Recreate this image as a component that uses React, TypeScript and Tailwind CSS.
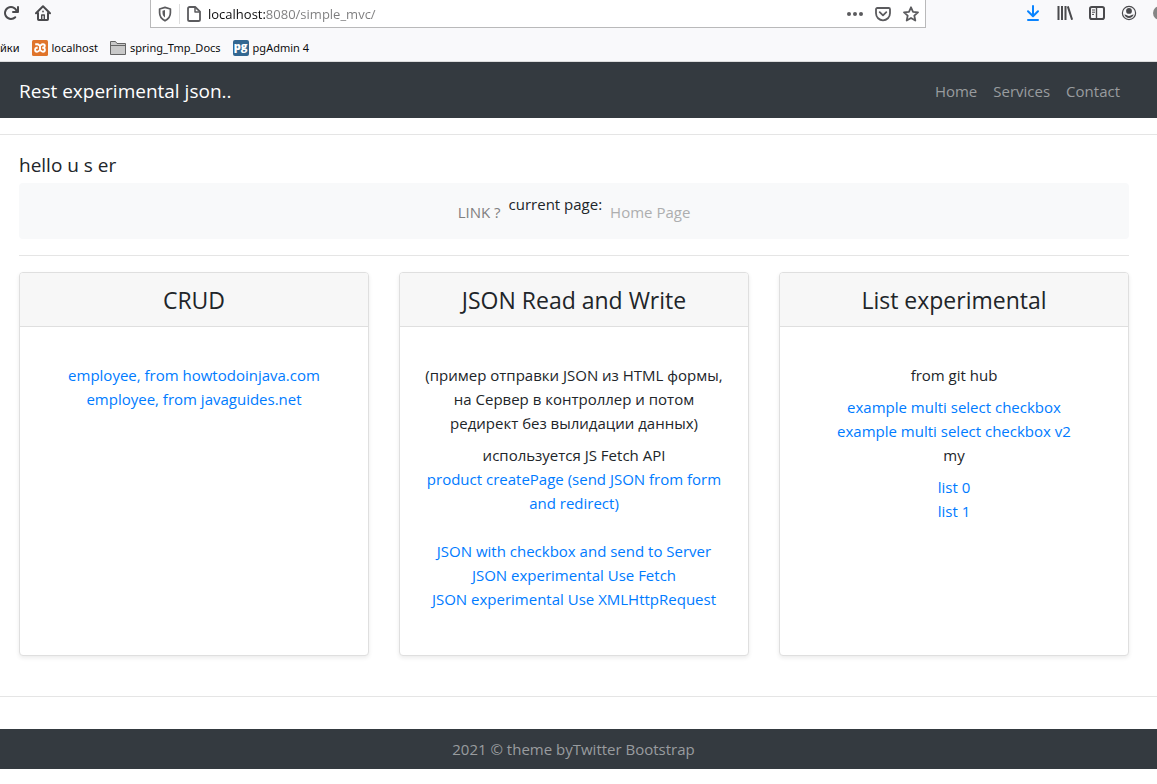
import type { ReactNode } from "react";

type TextLinkProps = { href: string; children: ReactNode };

function TextLink({ href, children }: TextLinkProps) {
  return (
    <a href={href} className="text-[#007bff] hover:underline">
      {children}
    </a>
  );
}

function Card({ title, children }: { title: string; children: ReactNode }) {
  return (
    <section className="overflow-hidden rounded border border-[#dfdfdf] bg-white text-center shadow-[0_2px_4px_rgba(0,0,0,0.08)]">
      <h4 className="border-b border-[#dfdfdf] bg-[#f7f7f7] px-5 pt-[13px] pb-[11px] text-[23px] leading-[29px]">{title}</h4>
      <div className="px-5 pt-9 pb-11">{children}</div>
    </section>
  );
}

function ToolButton({ label, children }: { label: string; children: ReactNode }) {
  return (
    <button type="button" aria-label={label} className="flex size-4 shrink-0 items-center justify-center text-[#4a4a4d]">
      {children}
    </button>
  );
}

function BrowserBar() {
  return (
    <div className="border-b border-[#dcdcdd] bg-[#f9f9fb] text-[#0c0c0d]">
      <div className="flex h-7 items-start">
        <div className="flex w-[150px] shrink-0 gap-4 pt-[5px] pl-[3px]">
          <ToolButton label="Reload">
            <svg viewBox="0 0 16 16" className="size-4" fill="currentColor">
              <path d="M15 1a1 1 0 0 0-1 1v2.4A7 7 0 1 0 8 15a7 7 0 0 0 4.95-2.05 1 1 0 0 0-1.41-1.41A5 5 0 1 1 12.55 6H10a1 1 0 0 0 0 2h5a1 1 0 0 0 1-1V2a1 1 0 0 0-1-1z" />
            </svg>
          </ToolButton>
          <ToolButton label="Home">
            <svg viewBox="0 0 16 16" className="size-4" fill="none" stroke="currentColor" strokeWidth="2" strokeLinejoin="round" strokeLinecap="round">
              <path d="M1 8.2 8 1.3l7 6.9" />
              <path d="M3 8v6.2a.8.8 0 0 0 .8.8h8.4a.8.8 0 0 0 .8-.8V8" />
              <path d="M6.7 14.5V10h2.6v4.5" strokeWidth="1.4" />
              <path d="M8 6.3v.4" strokeWidth="1.6" />
            </svg>
          </ToolButton>
        </div>
        <div className="flex h-7 w-[776px] shrink items-center border-x border-b border-[#b9b9ba] bg-white px-[6px]">
          <ToolButton label="Tracking protection">
            <svg viewBox="0 0 16 16" className="size-4" fill="none" stroke="#5b5b5e" strokeWidth="1.7" strokeLinejoin="round">
              <path d="M8 1.4 13.4 3v3.8c0 3.3-1.8 6.2-5.4 8-3.6-1.8-5.4-4.7-5.4-8V3z" />
              <path d="M8 4v7.6c-1.7-1.2-2.5-2.8-2.5-4.8V4.7z" fill="#5b5b5e" stroke="none" />
            </svg>
          </ToolButton>
          <span className="mx-1.5 h-5 w-px bg-[#dedede]" />
          <ToolButton label="Page information">
            <svg viewBox="0 0 16 16" className="size-4" fill="none" stroke="#5b5b5e" strokeWidth="1.8" strokeLinejoin="round">
              <path d="M3.6 1h5.6L14 5.6v7.8A1.6 1.6 0 0 1 12.400 15H3.6A1.6 1.6 0 0 1 2 13.4V2.6A1.6 1.6 0 0 1 3.6 1z" />
              <path d="M9 1.2V6h4.8" strokeWidth="1.5" />
            </svg>
          </ToolButton>
          <input
            aria-label="Address"
            defaultValue="localhost:8080/simple_mvc/"
            className="ml-1.5 h-6 min-w-0 flex-1 bg-linear-to-r from-[#0c0c0d] from-[57px] to-[#7c7c7d] to-[57px] bg-clip-text font-['Open_Sans','Noto_Sans',sans-serif] text-[13px] text-transparent outline-none"
          />
          <div className="flex items-center gap-3">
            <ToolButton label="Page actions">
              <svg viewBox="0 0 16 16" className="size-4" fill="#5b5b5e">
                <circle cx="2" cy="8" r="2" />
                <circle cx="8" cy="8" r="2" />
                <circle cx="14" cy="8" r="2" />
              </svg>
            </ToolButton>
            <ToolButton label="Save to Pocket">
              <svg viewBox="0 0 16 16" className="size-4" fill="none" stroke="#5b5b5e" strokeWidth="1.8" strokeLinecap="round" strokeLinejoin="round">
                <path d="M2.3 2h11.400c.7 0 1.300.6 1.300 1.300v4A7 7 0 0 1 1 7.300v-4C1 2.600 1.600 2 2.300 2z" />
                <path d="M4.700 6.200 8 9.400l3.300-3.200" />
              </svg>
            </ToolButton>
            <ToolButton label="Bookmark this page">
              <svg viewBox="0 0 16 16" className="size-4" fill="none" stroke="#5b5b5e" strokeWidth="1.8" strokeLinejoin="round">
                <path d="m8 1.300 2 4.500 5 .5-3.700 3.300 1 4.900L8 12l-4.300 2.500 1-4.900L1 6.300l5-.5z" />
              </svg>
            </ToolButton>
          </div>
        </div>
        <div className="ml-auto flex shrink-0 gap-4 overflow-hidden pt-[5px]">
          <ToolButton label="Downloads">
            <svg viewBox="0 0 16 16" className="size-4" fill="none" stroke="#0a84ff" strokeWidth="2" strokeLinecap="round" strokeLinejoin="round">
              <path d="M8 1v10M3 6.300 8 11.200l5-4.900M3 15h10" />
            </svg>
          </ToolButton>
          <ToolButton label="Library">
            <svg viewBox="0 0 16 16" className="size-4" fill="none" stroke="currentColor" strokeWidth="2">
              <path d="M1.500 1v14M5 1v14M8.500 1v14M10.800 1.400l4.300 13.300" />
            </svg>
          </ToolButton>
          <ToolButton label="Sidebars">
            <svg viewBox="0 0 16 16" className="size-4" fill="none" stroke="currentColor" strokeWidth="2">
              <rect x="1" y="2" width="14" height="12" rx="1.800" />
              <path d="M7.500 2v12" strokeWidth="1.400" />
              <path d="M3 5h3M3 7.200h3M3 9.400h2" strokeWidth="1" />
            </svg>
          </ToolButton>
          <ToolButton label="Account">
            <svg viewBox="0 0 16 16" className="size-4" fill="currentColor">
              <circle cx="8" cy="8" r="6.600" fill="none" stroke="currentColor" strokeWidth="1.200" />
              <circle cx="8" cy="5.900" r="2.900" />
              <path d="M3.300 9.600c1 .1 1.800.2 2.600.7a4 4 0 0 0 4.200 0c.8-.5 1.600-.6 2.600-.7-.8 2.200-2.500 3.500-4.700 3.500s-3.900-1.300-4.700-3.500z" />
            </svg>
          </ToolButton>
          <button type="button" aria-label="Extension" className="h-4 w-1 shrink-0 overflow-hidden">
            <svg viewBox="0 0 4 16" className="h-4 w-1">
              <circle cx="7" cy="8" r="7" fill="#858585" />
            </svg>
          </button>
        </div>
      </div>
      <nav
        aria-label="Bookmarks"
        className="flex h-[33px] items-center gap-3 pt-1.5 font-['Noto_Sans','Open_Sans',sans-serif] text-[11px] leading-4"
      >
        <a href="#getting-started">йки</a>
        <a href="#localhost" className="flex items-center gap-1">
          <svg viewBox="0 0 16 16" className="size-4" aria-hidden="true">
            <rect width="16" height="16" rx="1.500" fill="#e0742b" />
            <path
              d="M3.200 4.300h2.300c1.400 0 1.400 1.200 2.500 1.200s1.100-1.200 2.500-1.200h.6c1 0 1.700.6 1.700 1.700 0 1-.5 1.600-1.400 1.800 1 .2 1.500.900 1.500 1.900 0 1.300-.8 2-1.900 2-1.800 0-1.800-1.500-3-1.500s-1.200 1.500-3 1.500c-1.100 0-1.900-.7-1.900-2 0-1 .5-1.700 1.500-1.900M8 5.500v4.700M4.200 7.800h1.500M10.200 7.800h1.700"
              fill="none"
              stroke="#fff"
              strokeWidth="1.900"
              strokeLinejoin="round"
            />
          </svg>
          localhost
        </a>
        <a href="#docs" className="flex items-center gap-1">
          <svg viewBox="0 0 16 16" className="size-4" aria-hidden="true" fill="#c9c9c9" stroke="#656565">
            <path d="M.5 14.500v-13h5l1.500 2h8.500v11z" />
            <path d="M.5 5.500h15" />
          </svg>
          spring_Tmp_Docs
        </a>
        <a href="#pgadmin" className="flex items-center gap-1">
          <span
            aria-hidden="true"
            className="flex size-4 items-center justify-center rounded-xs bg-[#336791] pb-1 font-['Open_Sans',sans-serif] text-[11px] leading-3 font-extrabold text-white"
          >
            pg
          </span>
          pgAdmin 4
        </a>
      </nav>
    </div>
  );
}

export default function App() {
  return (
    <div className="min-h-screen overflow-x-hidden bg-white font-['Open_Sans','Noto_Sans',sans-serif] text-[15px] leading-6 text-[#212529]">
      <BrowserBar />

      <header className="flex h-14 items-center justify-between bg-[#343a40] pt-0.5 pr-[29px] pl-[19px]">
        <a href="#top" className="text-[19px] text-white">
          Rest experimental json..
        </a>
        <nav aria-label="Main" className="flex text-[#999c9f]">
          <a href="#home" className="px-2">Home</a>
          <a href="#services" className="px-2">Services</a>
          <a href="#contact" className="px-2">Contact</a>
        </nav>
      </header>

      <hr className="my-4 border-[#e5e5e5]" />

      <main className="pr-7 pl-[19px]">
        <h5 className="pt-0.5 pb-1.5 text-[19px]">hello u s er</h5>
        <div className="flex h-14 items-start justify-center rounded bg-[#f8f9fa] pt-[9px]">
          <a href="#link" className="px-2 pt-2 text-[#7f8081]">LINK ?</a>
          <p>current page:</p>
          <a href="#current" className="px-2 pt-2 text-[#adaeaf]">Home Page</a>
        </div>
        <hr className="my-4 border-[#e5e5e5]" />

        <div className="mb-10 grid grid-cols-3 gap-[30px]">
          <Card title="CRUD">
            <TextLink href="#howtodoinjava">employee, from howtodoinjava.com</TextLink>
            <br />
            <TextLink href="#javaguides">employee, from javaguides.net</TextLink>
          </Card>
          <Card title="JSON Read and Write">
            <p className="mb-2">
              (пример отправки JSON из HTML формы, на Сервер в контроллер и потом редирект без вылидации данных)
            </p>
            <p>используется JS Fetch API</p>
            <p className="mb-6">
              <TextLink href="#product">product createPage (send JSON from form and redirect)</TextLink>
            </p>
            <TextLink href="#checkbox">JSON with checkbox and send to Server</TextLink>
            <br />
            <TextLink href="#fetch">JSON experimental Use Fetch</TextLink>
            <br />
            <TextLink href="#xhr">JSON experimental Use XMLHttpRequest</TextLink>
          </Card>
          <Card title="List experimental">
            <p className="mb-2">from git hub</p>
            <TextLink href="#multi">example multi select checkbox</TextLink>
            <br />
            <TextLink href="#multi-v2">example multi select checkbox v2</TextLink>
            <p className="mb-2">my</p>
            <TextLink href="#list-0">list 0</TextLink>
            <br />
            <TextLink href="#list-1">list 1</TextLink>
          </Card>
        </div>
      </main>

      <hr className="mb-8 border-[#e5e5e5]" />
      <footer className="bg-[#343a40] py-2 pr-[10px] text-center text-[#999c9f]">
        2021 © theme by<a href="#bootstrap">Twitter Bootstrap</a>
      </footer>
    </div>
  );
}
